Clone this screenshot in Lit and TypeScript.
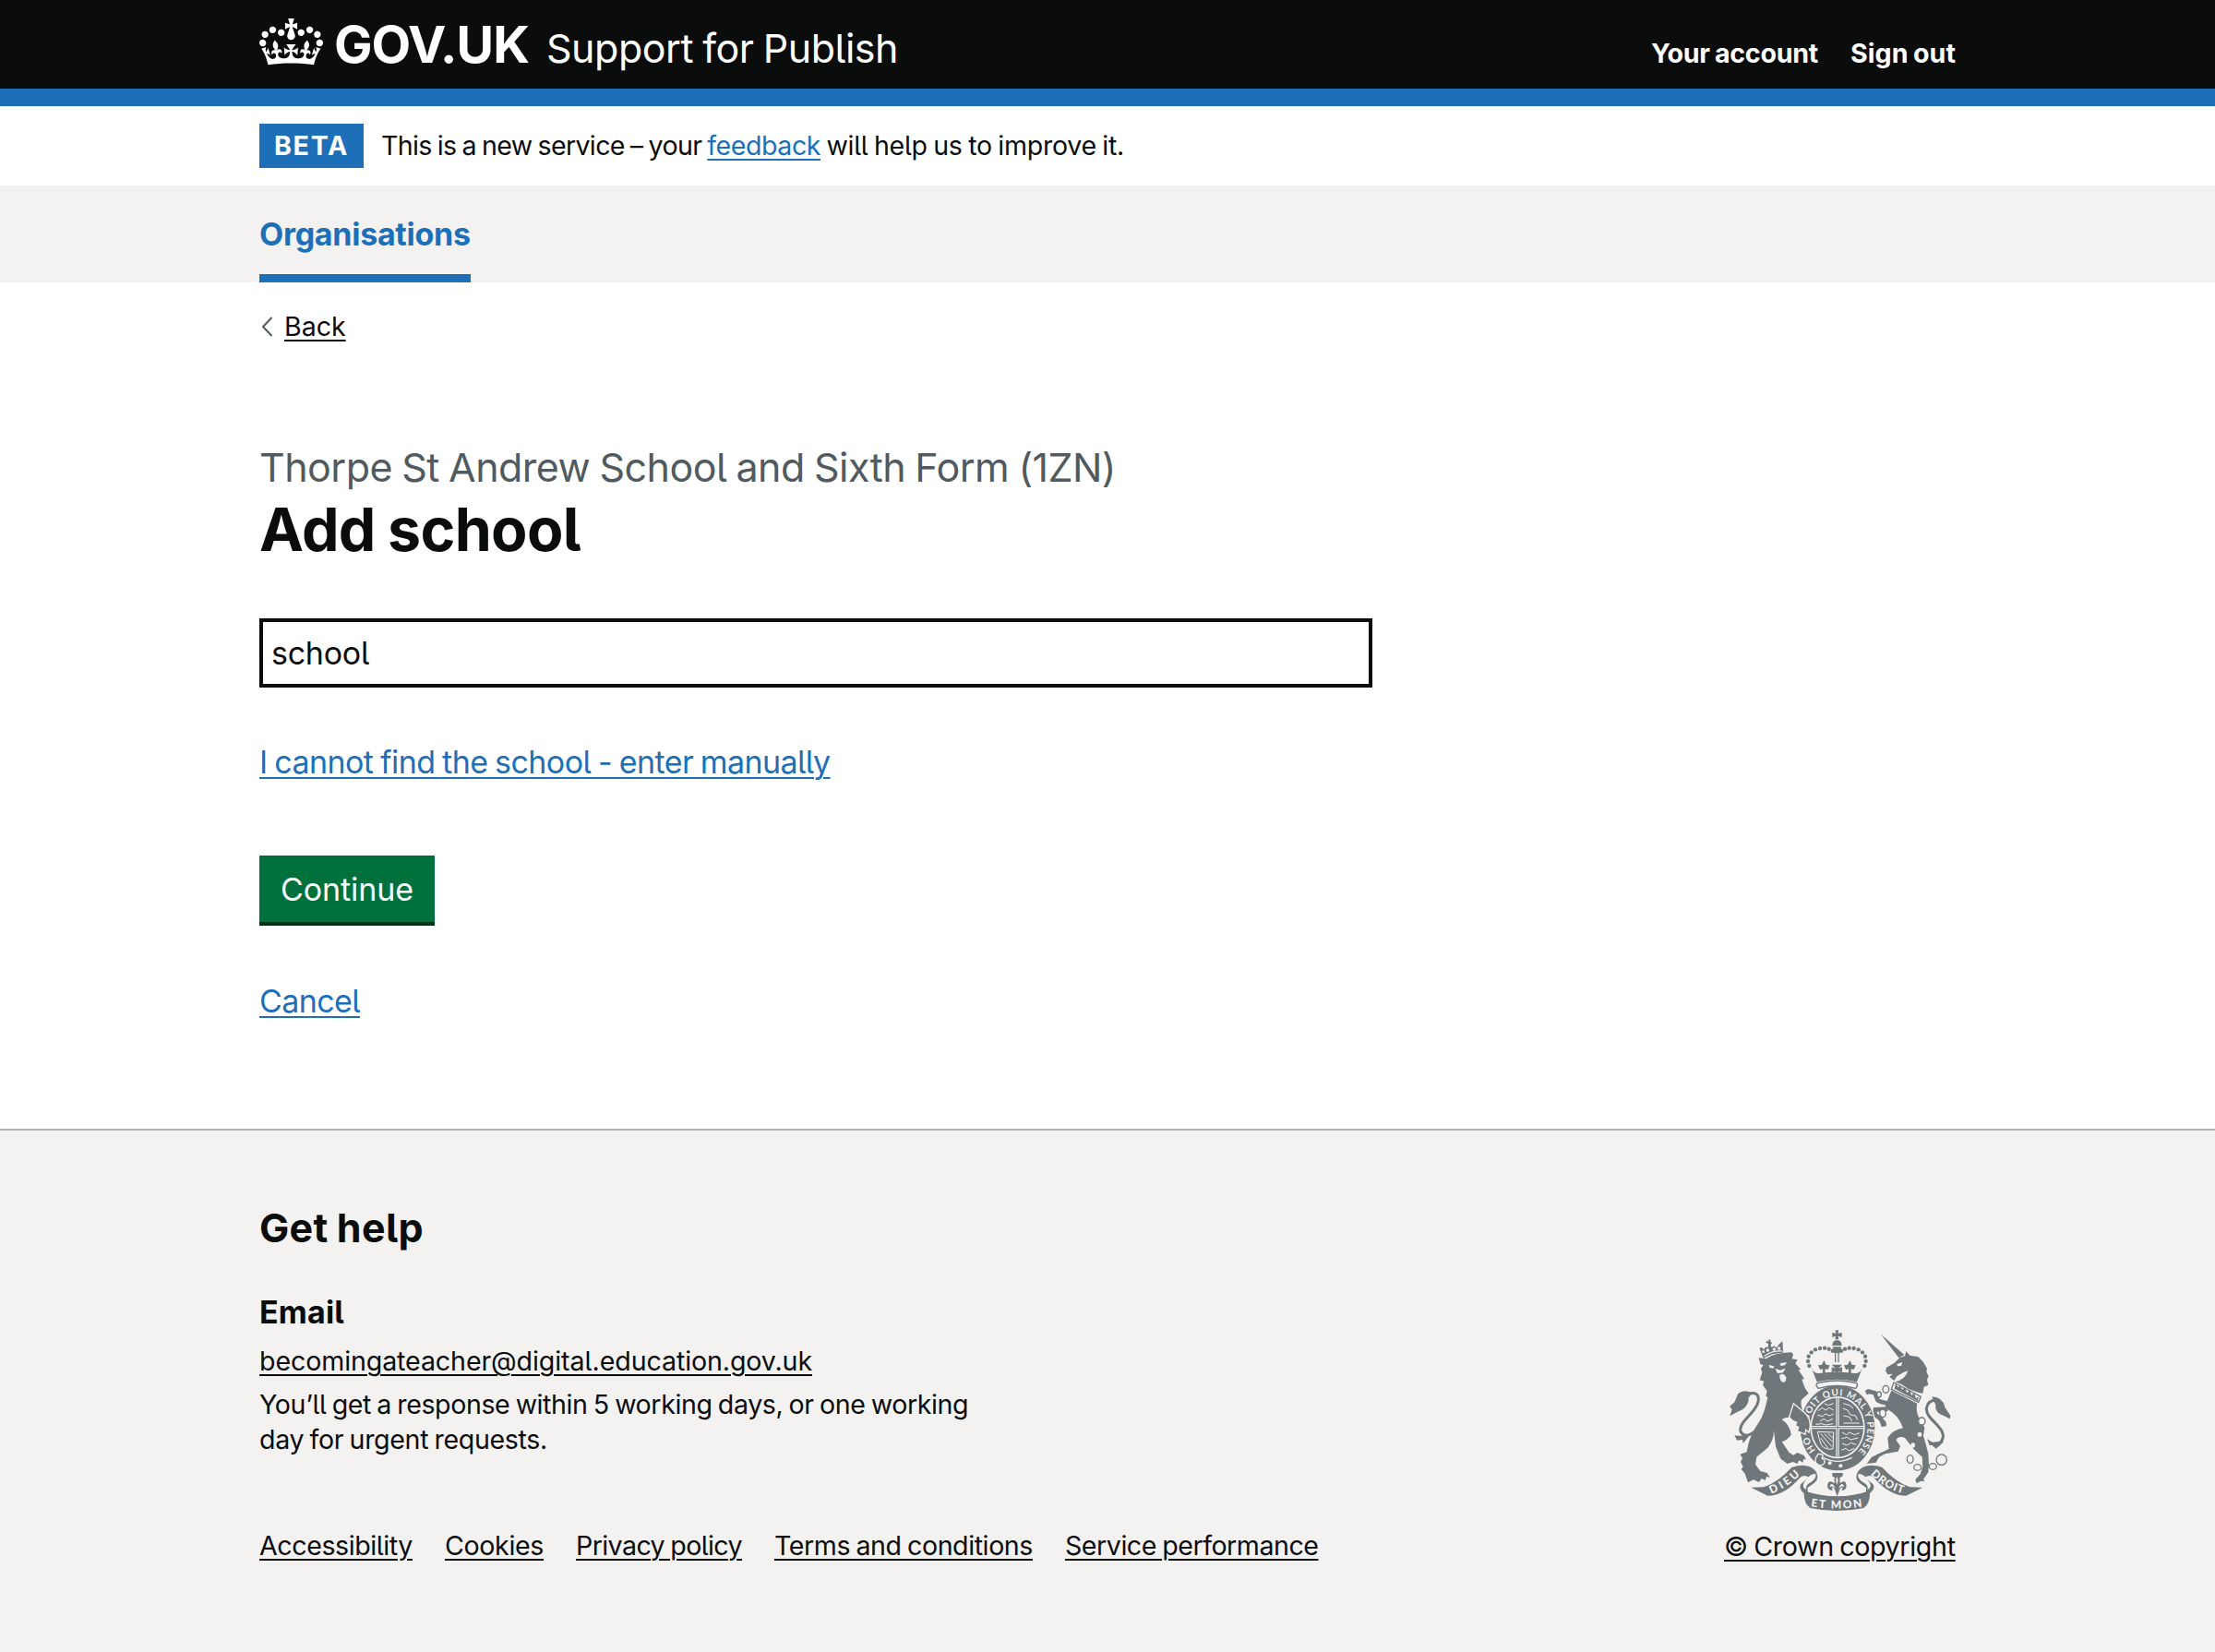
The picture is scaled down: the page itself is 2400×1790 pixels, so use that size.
import { LitElement, html, css, svg } from "lit";

const CROWN =
  "M25 30.2c3.5 1.5 7.7-.2 9.1-3.7 1.5-3.6-.2-7.8-3.9-9.2-3.6-1.4-7.6.3-9.1 3.9-1.4 3.5.3 7.5 3.9 9zM9 39.5c3.6 1.5 7.8-.2 9.2-3.7 1.5-3.6-.2-7.8-3.9-9.1-3.6-1.5-7.6.2-9.1 3.8-1.4 3.5.3 7.5 3.8 9zM4.4 57.2c3.5 1.5 7.7-.2 9.1-3.8 1.5-3.6-.2-7.7-3.9-9.1-3.5-1.5-7.6.3-9.1 3.8-1.4 3.5.3 7.6 3.9 9.1zm38.3-21.4c3.5 1.5 7.7-.2 9.1-3.8 1.5-3.6-.2-7.7-3.9-9.1-3.6-1.5-7.6.3-9.1 3.8-1.3 3.6.4 7.7 3.9 9.1zm64.4-5.6c-3.6 1.5-7.8-.2-9.1-3.7-1.5-3.6.2-7.8 3.8-9.2 3.6-1.4 7.7.3 9.2 3.9 1.3 3.5-.4 7.5-3.9 9zm15.9 9.3c-3.6 1.5-7.7-.2-9.1-3.7-1.5-3.6.2-7.8 3.7-9.1 3.6-1.5 7.7.2 9.2 3.8 1.5 3.5-.3 7.5-3.8 9zm4.7 17.7c-3.6 1.5-7.8-.2-9.2-3.8-1.5-3.6.2-7.7 3.9-9.1 3.6-1.5 7.7.3 9.2 3.8 1.3 3.5-.4 7.6-3.9 9.1zM89.3 35.8c-3.6 1.5-7.8-.2-9.2-3.8-1.4-3.6.2-7.7 3.9-9.1 3.6-1.5 7.7.3 9.2 3.8 1.4 3.6-.3 7.7-3.9 9.1zM69.7 17.7l8.9 4.7V9.3l-8.9 2.8c-.2-.3-.5-.6-.9-.9L72.4 0H59.6l3.5 11.2c-.3.3-.6.5-.9.9l-8.8-2.8v13.1l8.8-4.7c.3.3.6.7.9.9l-5 15.4v.1c-.2.8-.4 1.6-.4 2.4 0 4.1 3.1 7.5 7 8.1h.2c.3 0 .7.1 1 .1.4 0 .7 0 1-.1h.2c4-.6 7.1-4.1 7.1-8.1 0-.8-.1-1.7-.4-2.4V34l-5.1-15.4c.4-.2.7-.6 1-.9zM66 92.8c16.9 0 32.8 1.1 47.1 3.2 4-16.9 8.9-26.7 14-33.5l-9.6-3.4c1 4.9 1.1 7.2 0 10.2-1.5-1.4-3-4.3-4.2-8.7L108.6 76c2.8-2 5-3.2 7.5-3.3-4.4 9.4-10 11.9-13.6 11.2-4.3-.8-6.3-4.6-5.6-7.9 1-4.7 5.7-5.9 8-.5 4.3-8.7-3-11.4-7.6-8.8 7.1-7.2 7.9-13.5 2.1-21.1-8 6.1-8.1 12.3-4.5 20.8-4.7-5.4-12.1-2.5-9.5 6.2 3.4-5.2 7.9-2 7.2 3.1-.6 4.3-6.4 7.8-13.5 7.2-10.3-.9-10.9-8-11.2-13.8 2.5-.5 7.1 1.8 11 7.3L80.2 60c-4.1 4.4-8 5.3-12.3 5.4 1.4-4.4 8-11.6 8-11.6H55.5s6.4 7.2 7.9 11.6c-4.2-.1-8-1-12.3-5.4l1.4 16.4c3.9-5.5 8.5-7.7 10.9-7.3-.3 5.8-.9 12.8-11.1 13.8-7.2.6-12.9-2.9-13.5-7.2-.7-5 3.8-8.3 7.1-3.1 2.7-8.7-4.6-11.6-9.4-6.2 3.7-8.5 3.6-14.7-4.6-20.8-5.8 7.6-5 13.9 2.2 21.1-4.7-2.6-11.9.1-7.7 8.8 2.3-5.5 7.1-4.2 8.1.5.7 3.3-1.3 7.1-5.7 7.9-3.5.7-9-1.8-13.5-11.2 2.5.1 4.7 1.3 7.5 3.3l-4.7-15.4c-1.2 4.4-2.7 7.2-4.3 8.7-1.1-3-.9-5.3 0-10.2l-9.5 3.4c5 6.9 9.9 16.7 14 33.5 14.8-2.1 30.8-3.2 47.7-3.2z";

// Pearls along the left arch of the central crown; the right arch mirrors them about x = 391.
const PEARLS: [number, number][] = [
  [301, 150], [297, 135], [299, 119], [308, 106], [321, 97], [336, 93], [351, 92], [365, 95], [377, 101],
];

const crest = svg`
  <svg class="crest" viewBox="42 33 720 591" role="img" aria-label="Royal coat of arms">
    <!-- lion -->
    <path d="M150 120L139 92Q150 86 153 99Q157 84 167 90L168 78L160 74L163 68L168 71L170 63L176 67L174 72L181 74L176 80L178 90Q190 80 194 92Q202 78 214 70L216 102L213 108Q182 106 152 126z"/>
    <g class="light"><circle cx="152" cy="104" r="4"/><circle cx="166" cy="99" r="5"/><circle cx="187" cy="96" r="5"/><circle cx="203" cy="93" r="5"/><path d="M154 116Q182 98 212 100L212 104Q182 102 155 120z"/></g>
    <path d="M137 124L160 127Q190 106 244 106L249 113L245 127L263 130L256 142L274 162L266 163L285 192L277 194L287 222L299 239L278 258Q270 268 280 296L250 322L240 318Q226 316 212 324Q240 344 242 374Q232 390 212 397L236 432L250 440L262 432L284 441L291 455L283 452L280 464L268 457L262 468L248 462L230 468L208 452L192 412L186 360Q186 392 166 416L130 446L126 470L142 492L164 498L173 512L162 510L158 522L146 516L138 528L120 520L102 529L92 500L80 486L86 478L78 462L84 450L76 437L98 430Q104 380 134 338Q154 312 166 252L160 248L164 232L150 212L154 200L140 196L148 172L144 158L152 148L142 144z"/>
    <g class="light"><path d="M170 146L188 152L184 158L172 155zM206 142L228 138L222 148L208 150zM190 158L206 164L224 158L216 172L198 174zM205 180Q216 170 226 186Q228 202 216 204Q204 198 205 180z"/></g>
    <path class="line tail" d="M96 241Q142 230 135 266C128 304 70 330 78 364Q92 388 126 362"/>
    <path d="M105 234Q84 228 70 240L58 268L42 282L50 292L43 313Q66 300 84 292Q106 276 104 252L116 240zM58 376Q80 380 110 372L86 402L84 390L66 392z"/>

    <!-- unicorn -->
    <path d="M534 47L592 124L610 114z"/>
    <path d="M549 166L552 155L578 140L596 122L612 118L616 102L628 116L656 121L672 138L684 158L682 168L689 184L684 194L688 212L674 218L670 240L655 236L625 226L601 210L580 202Q612 196 622 166Q604 170 586 184L577 198L562 186L572 176L556 178z"/>
    <path class="light" d="M586 144L604 138L600 150L588 151z"/>
    <path class="line" d="M576 204L664 250L656 268L568 226z"/>
    <path d="M578 224L582 206L590 220L597 212L603 228L611 220L619 238L628 229L633 246L642 238L648 256L656 250L654 264z"/>
    <path d="M568 230L652 272Q646 300 660 322L676 350L672 378L680 404L688 436L690 470L688 496L672 518L676 526L664 524L650 532L646 520L662 502L670 478L668 446L640 420L612 384Q588 376 584 392L597 410L590 428L548 436L528 446L518 464L488 468L504 446L560 420L556 384Q572 358 606 352Q590 308 556 292L548 280z"/>
    <path class="line limb" d="M562 272Q532 268 524 262L514 238L488 232M556 290L516 292L514 308L534 322L546 344"/>
    <path d="M482 230L500 226L498 240L488 244zM514 310L550 330L552 346L536 348L530 330z"/>
    <path class="line tail" d="M702 408Q738 404 736 374C732 342 680 322 682 288Q688 258 716 262"/>
    <path d="M700 250Q736 252 742 284L760 312L758 322L738 312Q708 304 712 276L704 262zM684 388L702 398L720 396L738 396L724 410L712 420L704 408L692 408z"/>
    <g class="ring">
      <circle cx="731" cy="455" r="17"/><ellipse cx="703" cy="477" rx="12" ry="10"/><ellipse cx="653" cy="480" rx="12" ry="10"/>
      <ellipse cx="629" cy="453" rx="10" ry="13"/><ellipse cx="667" cy="330" rx="11" ry="12"/><ellipse cx="540" cy="304" rx="10" ry="13"/>
      <ellipse cx="550" cy="226" rx="10" ry="12"/><ellipse cx="528" cy="243" rx="7" ry="9"/>
    </g>
    <g class="light"><ellipse cx="638" cy="408" rx="7" ry="8"/><ellipse cx="660" cy="373" rx="7" ry="8"/></g>

    <!-- garter and quartered shield -->
    <ellipse class="halo" cx="393" cy="352" rx="123" ry="140"/>
    <ellipse class="light" cx="393" cy="350" rx="89" ry="101"/>
    <ellipse cx="393" cy="350" rx="84" ry="96"/>
    <path class="cross" d="M393 254V446M309 350H477"/>
    <path class="line thin" d="M393 254V446M309 350H477"/>
    <path class="cut weave" d="M330 296l14-10 10 8 12-8 14 8M328 310l16 4 10-8 14 6 12-6M336 330l12-8 12 8 18-8M322 340l20-2 14 4 22-4M350 272l12 6 18-6M408 366l14 8 10-8 16 8 16-6M406 386l18-4 12 8 24-6M408 402l16 6 12-8 18 6M406 424l14-6 10 8 18-8M412 272l20 6 12 10M410 288l16 6 8 14 18 4 6 14M412 312l20 4 8 14M412 336h52"/>
    <path class="cut weave" d="M328 364L380 366L378 420Q350 424 340 406Q332 386 328 364zM338 370L374 412M350 370L376 396M338 384L362 418M362 370L378 384"/>
    <g class="light motto">
      <path id="honi" class="none" d="M322 424A97 105 0 0 1 296 350"/>
      <path id="soit" class="none" d="M299 326A97 105 0 1 1 452 435"/>
      <text><textPath href="#honi" textLength="50">HO</textPath></text>
      <text><textPath href="#soit" textLength="375">SOIT QUI MAL Y PENSE</textPath></text>
    </g>
    <path class="cut" d="M346 448Q394 472 440 448"/>
    <path class="ringfill" d="M330 436Q352 436 342 450Q362 462 340 474Q316 470 322 450z"/>
    <g class="light"><circle cx="368" cy="466" r="6"/><circle cx="403" cy="475" r="6"/></g>
    <path class="paw" d="M250 272L288 304Q304 320 304 345L300 366L290 358L288 373L276 367L262 363L266 350L256 344L260 334L247 328L236 316z"/>

    <!-- central crown -->
    <path d="M386 34H396L395 45L407 41V57L395 53L397 64H385L387 53L376 57V41L387 45zM376 84Q376 68 391 66Q407 68 407 84zM378 88H405L402 108H380zM384 108H388V138H384zM394 108H398V138H394z"/>
    ${PEARLS.map(([x, y]) => svg`<circle cx=${x} cy=${y} r="6.5"/><circle cx=${782 - x} cy=${y} r="6.5"/>`)}
    <path d="M349 132L356 146L368 148L362 162L353 160V176H345V160L336 162L330 148L342 146zM433 132L426 146L414 148L420 162L429 160V176H437V160L446 162L452 148L440 146zM374 146H408L396 158L408 154V172L396 168L398 180H384L386 168L374 172V154L386 158z"/>
    <path d="M308 156Q316 176 334 174Q391 166 448 174Q466 176 474 156L456 202Q391 186 326 202z"/>
    <path class="cushion" d="M336 204Q391 192 446 204Q466 206 452 223Q391 206 330 223Q316 206 336 204z"/>

    <!-- ribbons -->
    <path d="M112 545L154 544Q200 528 244 480Q296 462 322 492Q336 516 318 530L296 546L296 560L286 566Q264 548 274 534L300 512Q284 502 272 512Q220 572 166 572z"/>
    <path d="M670 545L628 544Q582 528 538 480Q486 462 460 492Q446 516 464 530L486 546L486 560L496 566Q518 548 508 534L482 512Q498 502 510 512Q562 572 616 572z"/>
    <path class="light" d="M284 530Q300 500 322 500Q326 518 300 532Q288 540 292 552Q276 544 284 530zM498 530Q482 500 460 500Q456 518 482 532Q494 540 490 552Q506 544 498 530z"/>
    <path d="M284 556Q391 592 498 556Q500 598 478 612Q391 630 304 612Q282 598 284 556z"/>
    <g class="light words">
      <path id="dieu" class="none" d="M178 566Q232 544 276 500"/>
      <path id="droit" class="none" d="M500 502Q546 552 612 566"/>
      <path id="etmon" class="none" d="M306 607Q391 620 478 607"/>
      <text><textPath href="#dieu" textLength="112">DIEU</textPath></text>
      <text><textPath href="#droit" textLength="124">DROIT</textPath></text>
      <text><textPath href="#etmon" textLength="168">ET MON</textPath></text>
    </g>
    <path d="M376 498H410V508L400 514Q402 524 400 532Q420 516 422 540Q420 556 406 554L410 546Q402 544 400 552L392 574L384 552Q382 544 374 546L378 554Q362 556 360 540Q362 516 384 532Q380 524 384 514L376 508z"/>
    <path class="light" d="M391 510Q398 522 391 536Q384 522 391 510zM376 534Q384 540 386 548Q374 538 368 544Q368 534 376 534zM406 534Q398 540 396 548Q408 538 414 544Q414 534 406 534z"/>
  </svg>`;

const FOOTER_LINKS: [string, string][] = [
  ["Accessibility", "accessibility"], ["Cookies", "cookies"], ["Privacy policy", "privacy"],
  ["Terms and conditions", "terms"], ["Service performance", "service"],
];

class AppRoot extends LitElement {
  static styles = css`
    :host { display: block; height: 1790px; background: #fff; color: #0b0c0c;
      font-family: "Inter", "Liberation Sans", sans-serif; font-size: 28.6px; line-height: 38px;
      font-feature-settings: "cv05" 1; word-spacing: -1.287px; letter-spacing: -.386px; }
    * { box-sizing: border-box; }
    h1, h2, h3, p { margin: 0; }
    .wrap { width: 1838px; margin-left: 281px; }
    a { color: inherit; text-decoration: underline 2px; text-underline-offset: 4px; white-space: nowrap; }
    .link { color: #1d70b8; }
    .header { height: 115px; background: #0b0c0c; border-bottom: 19px solid #1d70b8; color: #fff; }
    .header .wrap { display: flex; align-items: flex-start; }
    .crown { width: 69px; height: 50.7px; margin-top: 20px; fill: #fff; flex: none; }
    .logo { margin: 18px 0 0 12px; font-size: 55.4px; font-weight: 700; line-height: 60px; width: 230px; letter-spacing: -.99px; }
    .product { margin-top: 29px; font-size: 43px; line-height: 46px; white-space: nowrap; letter-spacing: -.486px; }
    .account { display: flex; gap: 35px; margin: 39px 0 0 auto; font-weight: 700; }
    .account a { text-decoration: none; letter-spacing: -.258px; }
    .account .out { letter-spacing: .046px; }
    .phase { height: 86px; padding-top: 19px; display: flex; line-height: 48px; }
    .tag { width: 113px; height: 48px; margin-right: 19px; background: #1d70b8; color: #fff; font-weight: 700; text-align: center; letter-spacing: 1.7px; }
    .intro { letter-spacing: -.672px; }
    .feedback { letter-spacing: -.472px; }
    .outro { letter-spacing: -.28px; }
    .nav { height: 105px; background: #f3f2f1; }
    .tab { display: inline-block; height: 105px; line-height: 105px; font-size: 34px; font-weight: 700; color: #1d70b8; text-decoration: none; box-shadow: inset 0 -9px #1d70b8; letter-spacing: -.279px; }
    .back { display: flex; align-items: center; padding-top: 29px; height: 67px; letter-spacing: -.023px; }
    .back svg { width: 27px; height: 22px; fill: none; stroke: #505a5f; stroke-width: 2; }
    .caption { margin-top: 105px; font-size: 43px; line-height: 57px; color: #505a5f; letter-spacing: -.542px; }
    h1 { margin-top: 4px; font-size: 64.4px; line-height: 70px; letter-spacing: -.666px; }
    .field { margin-top: 61px; width: 1206px; height: 75px; border: 4px solid #0b0c0c; padding-left: 9px; font-size: 34px; line-height: 67px; letter-spacing: -.269px; }
    .para { font-size: 34px; line-height: 48px; }
    .manual { margin-top: 57px; letter-spacing: -.58px; }
    .button { margin-top: 77px; width: 190px; height: 76px; background: #00703c; border-bottom: 4px solid #002d18; color: #fff; font-size: 34px; line-height: 74px; text-align: center; letter-spacing: -.087px; }
    .cancel { margin-top: 58px; letter-spacing: -.605px; }
    .footer { margin-top: 114px; height: 567px; border-top: 2px solid #b1b4b6; background: #f3f2f1; padding-top: 77px; }
    .footer .wrap { display: flex; justify-content: space-between; }
    .footer h2 { font-size: 43px; line-height: 57px; letter-spacing: .335px; }
    .footer h3 { margin: 39px 0 10px; font-size: 34px; line-height: 48px; letter-spacing: .17px; }
    .mail { margin-bottom: 9px; letter-spacing: -.111px; }
    .note { letter-spacing: -.42px; }
    .note .second { letter-spacing: -.348px; }
    .links { display: flex; gap: 35px; margin-top: 77px; }
    .accessibility { letter-spacing: -.416px; }
    .cookies { letter-spacing: -.366px; }
    .privacy { letter-spacing: -.592px; }
    .terms { letter-spacing: -.422px; }
    .service { letter-spacing: -.473px; }
    .crown-copy { display: flex; flex-direction: column; margin-top: 139px; width: 251px; letter-spacing: -.323px; }
    .crest { width: 240px; height: 197px; margin: 0 0 19px 6px; fill: #6f777b; }
    .light { fill: #f3f2f1; }
    .none { fill: none; }
    .line { fill: none; stroke: #6f777b; stroke-width: 4; }
    .tail { stroke-width: 9; }
    .limb { stroke-width: 14; }
    .thin { stroke-width: 3; }
    .halo, .paw { stroke: #f3f2f1; stroke-width: 4; }
    .cut { fill: none; stroke: #f3f2f1; stroke-width: 4; }
    .weave { stroke-width: 3; }
    .cross { fill: none; stroke: #f3f2f1; stroke-width: 10; }
    .ring, .cushion { fill: #f3f2f1; stroke: #6f777b; stroke-width: 4; }
    .ringfill { fill: #6f777b; stroke: #f3f2f1; stroke-width: 4; }
    .motto { font: 700 30px "Lato", sans-serif; letter-spacing: 0; word-spacing: 0; }
    .words { font: 900 36px "Lato", sans-serif; letter-spacing: 0; word-spacing: 0; }
  `;

  render() {
    return html`
      <header class="header"><div class="wrap">
        <svg class="crown" viewBox="0 0 132 97" aria-hidden="true"><path d=${CROWN} /></svg>
        <span class="logo">GOV.UK</span>
        <span class="product">Support for Publish</span>
        <nav class="account"><a>Your account</a><a class="out">Sign out</a></nav>
      </div></header>
      <div class="wrap phase"><strong class="tag">BETA</strong><span><span class="intro">This is a new service – your </span><a class="link feedback">feedback</a><span class="outro"> will help us to improve it.</span></span></div>
      <nav class="nav"><div class="wrap"><a class="tab">Organisations</a></div></nav>
      <main class="wrap">
        <div class="back"><svg viewBox="0 0 27 22"><path d="M13.5 1L4 11L13.5 21" /></svg><a>Back</a></div>
        <div class="caption">Thorpe St Andrew School and Sixth Form (1ZN)</div>
        <h1>Add school</h1>
        <div class="field">school</div>
        <p class="para manual"><a class="link">I cannot find the school - enter manually</a></p>
        <div class="button">Continue</div>
        <p class="para cancel"><a class="link">Cancel</a></p>
      </main>
      <footer class="footer"><div class="wrap">
        <div>
          <h2>Get help</h2>
          <h3>Email</h3>
          <p class="mail"><a>becomingateacher@digital.education.gov.uk</a></p>
          <p class="note">You’ll get a response within 5 working days, or one working<br /><span class="second">day for urgent requests.</span></p>
          <nav class="links">${FOOTER_LINKS.map(([label, name]) => html`<a class=${name}>${label}</a>`)}</nav>
        </div>
        <div class="crown-copy">${crest}<a>© Crown copyright</a></div>
      </div></footer>`;
  }
}
customElements.define("app-root", AppRoot);
